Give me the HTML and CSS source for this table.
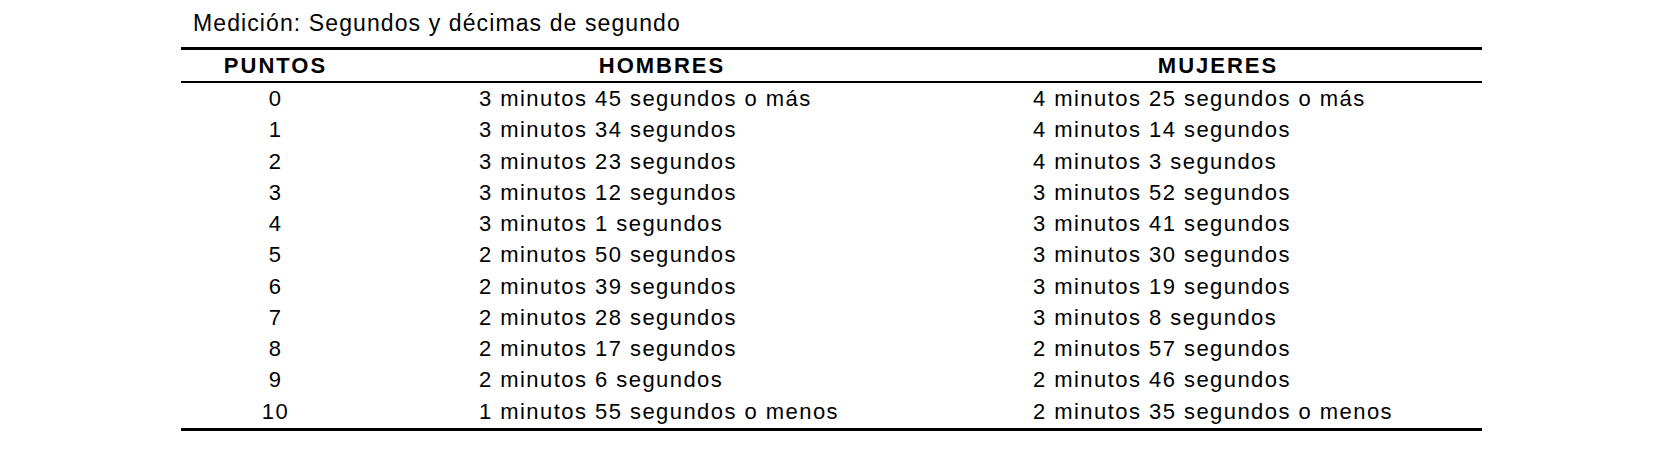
FILE: index.html
```html
<!DOCTYPE html>
<html lang="es">
<head>
<meta charset="utf-8">
<title>Medición</title>
<link rel="stylesheet" href="styles.css">
</head>
<body>
<div class="page">
  <p class="caption">Medición: Segundos y décimas de segundo</p>
  <div class="scores">
    <div class="row head">
      <div class="cell pts">PUNTOS</div>
      <div class="cell ctr">HOMBRES</div>
      <div class="cell ctr">MUJERES</div>
    </div>
    <div class="body">
      <div class="row"><div class="cell pts">0</div><div class="cell men">3 minutos 45 segundos o más</div><div class="cell women">4 minutos 25 segundos o más</div></div>
      <div class="row"><div class="cell pts">1</div><div class="cell men">3 minutos 34 segundos</div><div class="cell women">4 minutos 14 segundos</div></div>
      <div class="row"><div class="cell pts">2</div><div class="cell men">3 minutos 23 segundos</div><div class="cell women">4 minutos 3 segundos</div></div>
      <div class="row"><div class="cell pts">3</div><div class="cell men">3 minutos 12 segundos</div><div class="cell women">3 minutos 52 segundos</div></div>
      <div class="row"><div class="cell pts">4</div><div class="cell men">3 minutos 1 segundos</div><div class="cell women">3 minutos 41 segundos</div></div>
      <div class="row"><div class="cell pts">5</div><div class="cell men">2 minutos 50 segundos</div><div class="cell women">3 minutos 30 segundos</div></div>
      <div class="row"><div class="cell pts">6</div><div class="cell men">2 minutos 39 segundos</div><div class="cell women">3 minutos 19 segundos</div></div>
      <div class="row"><div class="cell pts">7</div><div class="cell men">2 minutos 28 segundos</div><div class="cell women">3 minutos 8 segundos</div></div>
      <div class="row"><div class="cell pts">8</div><div class="cell men">2 minutos 17 segundos</div><div class="cell women">2 minutos 57 segundos</div></div>
      <div class="row"><div class="cell pts">9</div><div class="cell men">2 minutos 6 segundos</div><div class="cell women">2 minutos 46 segundos</div></div>
      <div class="row"><div class="cell pts">10</div><div class="cell men">1 minutos 55 segundos o menos</div><div class="cell women">2 minutos 35 segundos o menos</div></div>
    </div>
  </div>
</div>
</body>
</html>
```

FILE: styles.css
```css
html, body {
  margin: 0;
  padding: 0;
  background: #ffffff;
}

body {
  font-family: "Liberation Sans", Arial, Helvetica, sans-serif;
  color: #000000;
}

.page {
  padding-left: 181px;
  width: 1301px;
}

.caption {
  margin: 0;
  padding-left: 12px;
  font-size: 23px;
  line-height: 47px;
  height: 47px;
  letter-spacing: 1.1px;
}

.scores {
  width: 1301px;
  font-size: 22px;
  letter-spacing: 1.45px;
  border-bottom: 3px solid #000;
}

.row {
  display: grid;
  grid-template-columns: 189px 584px 528px;
  height: 31.27px;
  line-height: 31.27px;
  white-space: nowrap;
}

.row.head {
  height: 31px;
  line-height: 31px;
  font-weight: bold;
  letter-spacing: 2px;
  border-top: 3px solid #000;
  border-bottom: 2px solid #000;
}

.body {
  display: flex;
  flex-direction: column;
  padding-bottom: 1px;
}

.pts,
.ctr {
  text-align: center;
}

.men {
  padding-left: 109px;
}

.women {
  padding-left: 79px;
}
```
